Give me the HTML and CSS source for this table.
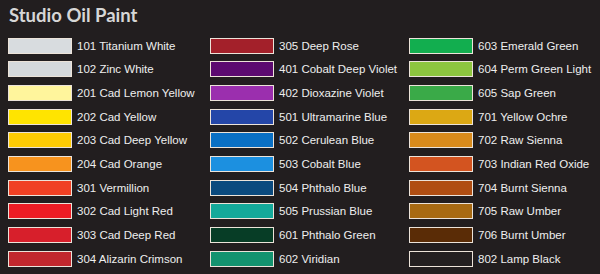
FILE: index.html
```html
<!DOCTYPE html>
<html>
<head>
<meta charset="utf-8">
<link rel="stylesheet" href="styles.css">
</head>
<body>
<div class="page">
  <h1 class="title">Studio Oil Paint</h1>
  <div class="chart">
    <div class="col col-1">
      <div class="row"><span class="sw" style="background:#d8dcdf"></span><span class="name">101 Titanium White</span></div>
      <div class="row"><span class="sw" style="background:#d5d9dc"></span><span class="name">102 Zinc White</span></div>
      <div class="row"><span class="sw" style="background:#fff59c"></span><span class="name">201 Cad Lemon Yellow</span></div>
      <div class="row"><span class="sw" style="background:#ffe400"></span><span class="name">202 Cad Yellow</span></div>
      <div class="row"><span class="sw" style="background:#ffcc05"></span><span class="name">203 Cad Deep Yellow</span></div>
      <div class="row"><span class="sw" style="background:#f7931e"></span><span class="name">204 Cad Orange</span></div>
      <div class="row"><span class="sw" style="background:#f04124"></span><span class="name">301 Vermillion</span></div>
      <div class="row"><span class="sw" style="background:#ed1c24"></span><span class="name">302 Cad Light Red</span></div>
      <div class="row"><span class="sw" style="background:#d71f2b"></span><span class="name">303 Cad Deep Red</span></div>
      <div class="row"><span class="sw" style="background:#c1272d"></span><span class="name">304 Alizarin Crimson</span></div>
    </div>
    <div class="col col-2">
      <div class="row"><span class="sw" style="background:#a3202a"></span><span class="name">305 Deep Rose</span></div>
      <div class="row"><span class="sw" style="background:#5c0a70"></span><span class="name">401 Cobalt Deep Violet</span></div>
      <div class="row"><span class="sw" style="background:#9b2fae"></span><span class="name">402 Dioxazine Violet</span></div>
      <div class="row"><span class="sw" style="background:#2446a8"></span><span class="name">501 Ultramarine Blue</span></div>
      <div class="row"><span class="sw" style="background:#0a70c4"></span><span class="name">502 Cerulean Blue</span></div>
      <div class="row"><span class="sw" style="background:#1c90e0"></span><span class="name">503 Cobalt Blue</span></div>
      <div class="row"><span class="sw" style="background:#0b4a7e"></span><span class="name">504 Phthalo Blue</span></div>
      <div class="row"><span class="sw" style="background:#14a99a"></span><span class="name">505 Prussian Blue</span></div>
      <div class="row"><span class="sw" style="background:#073d26"></span><span class="name">601 Phthalo Green</span></div>
      <div class="row"><span class="sw" style="background:#13936f"></span><span class="name">602 Viridian</span></div>
    </div>
    <div class="col col-3">
      <div class="row"><span class="sw" style="background:#12ae4f"></span><span class="name">603 Emerald Green</span></div>
      <div class="row"><span class="sw" style="background:#8dc63f"></span><span class="name">604 Perm Green Light</span></div>
      <div class="row"><span class="sw" style="background:#3aaa48"></span><span class="name">605 Sap Green</span></div>
      <div class="row"><span class="sw" style="background:#dca814"></span><span class="name">701 Yellow Ochre</span></div>
      <div class="row"><span class="sw" style="background:#d98b1c"></span><span class="name">702 Raw Sienna</span></div>
      <div class="row"><span class="sw" style="background:#d35420"></span><span class="name">703 Indian Red Oxide</span></div>
      <div class="row"><span class="sw" style="background:#b04e12"></span><span class="name">704 Burnt Sienna</span></div>
      <div class="row"><span class="sw" style="background:#a86a12"></span><span class="name">705 Raw Umber</span></div>
      <div class="row"><span class="sw" style="background:#5a2c06"></span><span class="name">706 Burnt Umber</span></div>
      <div class="row"><span class="sw" style="background:#231f20"></span><span class="name">802 Lamp Black</span></div>
    </div>
  </div>
</div>
</body>
</html>
```

FILE: styles.css
```css
html, body {
  margin: 0;
  padding: 0;
  background: #221e1f;
}

.page {
  width: 600px;
  height: 274px;
  overflow: hidden;
  padding: 4px 0 0 0;
  box-sizing: border-box;
}

.title {
  margin: 0 0 0 9px;
  height: 30px;
  font-family: "Lato", "Liberation Sans", sans-serif;
  font-weight: 700;
  font-size: 18.5px;
  line-height: 22px;
  color: #d6d6d6;
  letter-spacing: 0;
}

.chart {
  display: grid;
  grid-template-columns: 202px 199px 1fr;
  padding-left: 8px;
}

.col {
  display: flex;
  flex-direction: column;
}

.row {
  display: flex;
  align-items: center;
  height: 23.67px;
}

.sw {
  display: block;
  flex: none;
  width: 64px;
  height: 16px;
  box-sizing: border-box;
  border: 1px solid #ece3d9;
}

.name {
  margin-left: 5px;
  font-family: "Liberation Sans", Arial, sans-serif;
  font-size: 11.5px;
  color: #eeeeee;
  white-space: nowrap;
}
```
